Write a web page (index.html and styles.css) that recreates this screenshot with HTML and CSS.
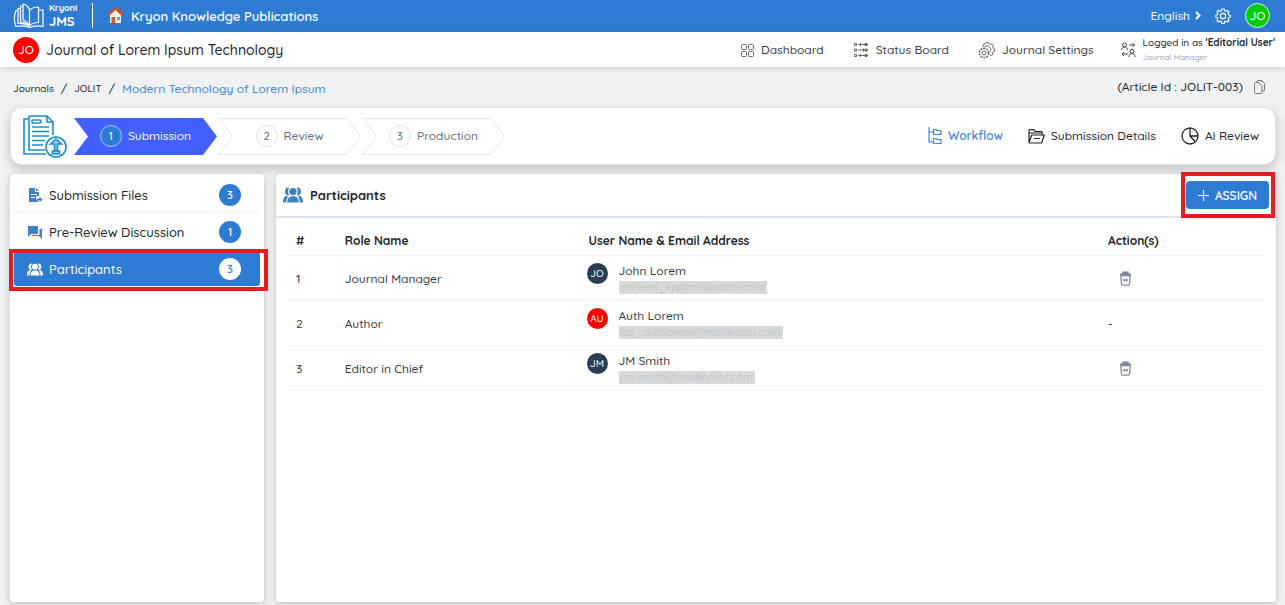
FILE: index.html
```html
<!DOCTYPE html>
<html lang="en">
<head>
	<meta charset="UTF-8">
	<meta name="viewport" content="width=device-width, initial-scale=1.0">
	<title>Participants | Kryoni JMS</title>
	<link rel="stylesheet" href="styles.css">
</head>
<body>

	<!-- SHARED ICONS -->
	<svg class="sprite" aria-hidden="true">
		<symbol id="people" viewBox="0 0 20 16">
			<circle cx="10" cy="4.6" r="3.700"/>
			<path d="M4.200 15.500c0-4.200 2-6.300 5.800-6.300s5.800 2.100 5.800 6.300z"/>
			<path d="M6.200.700C4.800 2.800 4.800 6 6.200 8.300 4 9.400 2 7.500 2 4.600S4 0 6.200.7zM13.800.7c1.400 2.100 1.400 5.300 0 7.600 2.200 1.100 4.200-.8 4.200-3.700S16 0 13.800.7z"/>
			<path d="M0 15.500c0-3.800 1-6 3-6.600l2.200.8C3.800 11 3.200 13 3.100 15.500zM20 15.500c0-3.800-1-6-3-6.600l-2.200.8c1.400 1.300 2 3.300 2.100 5.800z"/>
		</symbol>
		<symbol id="trash" viewBox="0 0 14 16">
			<g fill="none" stroke="currentColor" stroke-width="1.400">
				<path d="M1 3.500h12M4.500 3V1.500h5V3" stroke-width="2"/>
				<path d="M2 5h10l-.7 9c0 .8-.5 1.200-1.200 1.200H3.900c-.7 0-1.200-.4-1.200-1.200z"/>
				<path d="M4.200 9.800h5.600M5.500 8.200v3M8.500 8.200v3" stroke-width="1.200"/>
			</g>
		</symbol>
	</svg>

	<!-- TOP BAR -->
	<header class="topbar">
		<a class="logo" href="#">
			<svg width="32" height="26" viewBox="0 0 32 26" fill="none" stroke="currentColor" stroke-width="1.200" stroke-linejoin="round">
				<path d="M16.500 7.500c2-2.500 5-3.500 9-3.500v15.500c-4 0-7 1-9 3.500z"/>
				<path d="M16.500 23c-1-3-3.500-5-6.500-6V1c3.500 1 6 3.500 6.500 6.500"/>
				<path d="M10 3.500L7.500 3v16c3.500 0 6.500 1.500 9 4M7.500 5.500H5v15c4-.5 8 .5 11.500 2.500"/>
				<path d="M5 7.500H3C1 12 1 18.500 3 23.500c5-1 9-1 13.500 1 4-2 8-2 13.500-1V7h-4.500"/>
			</svg>
			<span class="logo-text">Kryoni<strong>JMS</strong></span>
		</a>
		<a class="publisher" href="#">
			<svg width="17" height="17" viewBox="0 0 17 17">
				<path d="M3 7l5.500-5L14 7v9H3z" fill="#f1eee8"/>
				<path d="M12 2h2v4h-2z" fill="#c8471d"/>
				<path d="M1 8.500L8.500 1.500 16 8.500" fill="none" stroke="#d84b20" stroke-width="2.200"/>
				<path d="M4.500 10H8v6H4.500z" fill="#d9541e"/>
				<path d="M10 10h3v3h-3z" fill="#58a6dd"/>
			</svg>
			Kryon Knowledge Publications
		</a>
		<div class="topbar-right">
			<button class="language" type="button">English
				<svg width="6" height="9" viewBox="0 0 6 9" fill="none" stroke="currentColor" stroke-width="2"><path d="M1 1l3.500 3.500L1 8"/></svg>
			</button>
			<button class="icon-button" type="button" aria-label="Settings">
				<svg width="16" height="16" viewBox="0 0 16 16" fill="none" stroke="currentColor" stroke-width="1.200" stroke-linejoin="round">
					<path d="M6.700 1h2.600l.4 1.800 1.300.5 1.500-.9 1.500 1.600-.9 1.500.5 1.200 1.600.5v2l-1.600.5-.5 1.300.9 1.500-1.500 1.500-1.500-.9-1.300.5-.4 1.700H6.700l-.4-1.700-1.300-.5-1.500.9L2 12.500l.9-1.500-.5-1.300L.8 9.200v-2l1.600-.5.500-1.200L2 4l1.500-1.600 1.500.9 1.300-.5z"/>
					<circle cx="8" cy="8" r="2.600"/>
				</svg>
			</button>
			<button class="avatar avatar-user" type="button">JO</button>
		</div>
	</header>

	<!-- JOURNAL BAR -->
	<div class="journalbar">
		<span class="avatar avatar-journal">JO</span>
		<h1 class="journal-name">Journal of Lorem Ipsum Technology</h1>
		<nav class="journal-nav">
			<a href="#">
				<svg width="13" height="13" viewBox="0 0 13 13" fill="none" stroke="currentColor">
					<rect x=".5" y=".5" width="5" height="5" rx="1"/><rect x="7.500" y=".5" width="5" height="5" rx="1"/>
					<rect x=".5" y="7.500" width="5" height="5" rx="1"/><rect x="7.500" y="7.500" width="5" height="5" rx="1"/>
				</svg>
				Dashboard
			</a>
			<a href="#">
				<svg width="16" height="16" viewBox="0 0 16 16" fill="none" stroke="currentColor">
					<path d="M1.500 1.500h2v2h-2zM1.500 7h2v2h-2zM1.500 12.500h2v2h-2zM5 2.500h10M5 8h10M5 13.500h10"/>
					<path d="M7.500 1v3M12 1.500h2v2h-2zM10.500 6.500v3M12 7h2v2h-2zM7.500 12v3M12 12.500h2v2h-2z"/>
				</svg>
				Status Board
			</a>
			<a href="#">
				<svg width="17" height="17" viewBox="0 0 17 17" fill="none" stroke="currentColor">
					<circle cx="6" cy="11" r="2"/><circle cx="6" cy="11" r="4.600" stroke-width="1.500" stroke-dasharray="2 .9"/>
					<path d="M4 4.500l1.500-.7.300-1.800 1.700-.3.800-1.200h2l.8 1.300 1.600.5 1.500-.3 1 1.500-.5 1.500.8 1.300 1.300.8-.2 2-1.500.7-.5 1.400.2 1.500-1.800.8-1.200-.7"/>
					<path d="M6 5.500c1-1.500 3-2 4.500-1.200 2.500 1 3.200 4.200 1.300 6"/>
				</svg>
				Journal Settings
			</a>
		</nav>
		<a class="logged-in" href="#">
			<svg width="15" height="16" viewBox="0 0 15 16" fill="none" stroke="currentColor">
				<circle cx="3.500" cy="3" r="2"/><path d="M.6 8c0-4 5.800-4 5.800 0M8 3h5.500M11.500 1l2 2-2 2"/>
				<circle cx="11" cy="9.300" r="2"/><path d="M8 15c0-4.500 6-4.500 6 0M7 12H1M3 10l-2 2 2 2"/>
			</svg>
			<span class="logged-text">
				<span>Logged in as <strong>'Editorial User'</strong></span>
				<small>Journal Manager</small>
			</span>
		</a>
	</div>

	<!-- BREADCRUMB -->
	<div class="crumbbar">
		<nav class="breadcrumb">
			<a href="#">Journals</a><span>/</span><a href="#">JOLIT</a><span>/</span><a class="current" href="#">Modern Technology of Lorem Ipsum</a>
		</nav>
		<span class="article-id">(Article Id : JOLIT-003)</span>
		<button class="icon-button copy" type="button" aria-label="Copy article id">
			<svg width="11" height="14" viewBox="0 0 11 14" fill="none" stroke="currentColor">
				<path d="M3 2.500V1.500q0-1 1-1h3.500l3 3V10q0 1-1 1H8M7.500.5V2"/>
				<path d="M.5 3.500q0-1 1-1H5L8 5.500v7q0 1-1 1H1.500q-1 0-1-1z"/>
			</svg>
		</button>
	</div>

	<!-- WORKFLOW STEPS -->
	<section class="workflow">
		<svg class="doc-icon" width="44" height="43" viewBox="0 0 44 43" fill="none" stroke="currentColor" stroke-width="1.600">
			<path d="M6 1h18l6 6v13M6 1v34h16M24 1v6h6M6 4H1v35h22"/>
			<rect x="9" y="5" width="9" height="3" rx="1"/>
			<path d="M9 12h17M9 16.500h17M9 21h17M9 25.500h13M9 30h11"/>
			<circle cx="33" cy="32" r="10" fill="#fff"/>
			<path d="M31.500 36v-7h-4l5.500-5 5.500 5h-4v7zM29.500 36h7v3h-7z" fill="#8fd0ea"/>
		</svg>
		<ol class="steps">
			<li class="step active">
				<svg class="step-shape" viewBox="0 0 143 37" preserveAspectRatio="none"><path d="M0 0h129l14 18.500L129 37H0l14-18.500z"/></svg>
				<span class="step-number">1</span>Submission
			</li>
			<li class="step">
				<svg class="step-shape" viewBox="0 0 143 37" preserveAspectRatio="none"><path d="M1 .5h128l13.500 18L129 36.500H1l13.500-18z"/></svg>
				<span class="step-number">2</span>Review
			</li>
			<li class="step">
				<svg class="step-shape" viewBox="0 0 143 37" preserveAspectRatio="none"><path d="M1 .5h128l13.500 18L129 36.500H1l13.500-18z"/></svg>
				<span class="step-number">3</span>Production
			</li>
		</ol>
		<nav class="views">
			<a class="active" href="#">
				<svg width="14" height="18" viewBox="0 0 14 18" fill="none" stroke="currentColor" stroke-width="1.200">
					<path d="M1 0v15h4M1 5h4M5.500 2.500h2.500l1 1h4v4H5.500zM5.500 11.500h2.500l1 1h4v4H5.500z"/>
				</svg>
				Workflow
			</a>
			<a href="#">
				<svg width="17" height="15" viewBox="0 0 17 15" fill="none" stroke="currentColor" stroke-width="1.200" stroke-linejoin="round">
					<path d="M1 13.500V1.500q0-.8.8-.8h4l1.500 1.800h6q.9 0 .9 1V6M1 13.500L3.800 6h12.500L14 13q-.3 1-1.200 1H1.500zM1 4h13M6 9.500h6"/>
				</svg>
				Submission Details
			</a>
			<a href="#">
				<svg width="18" height="18" viewBox="0 0 18 18" fill="none" stroke="currentColor" stroke-width="1.300">
					<circle cx="9" cy="9" r="8"/><path d="M9 1v8h8M9 9l5.500 6"/>
				</svg>
				AI Review
			</a>
		</nav>
	</section>

	<main class="content">
		<!-- SIDEBAR -->
		<aside class="sidebar">
			<a class="side-item" href="#">
				<svg width="16" height="16" viewBox="0 0 16 16">
					<path d="M2 1h6v4h4v4H9v4h2v2H2z" fill="currentColor"/><path d="M9 1l3 3H9z" fill="currentColor"/>
					<path d="M4 7.500h6M4 10.500h4" stroke="#fff"/><path d="M9.500 12.500h5M12.500 10.500l2 2-2 2" fill="none" stroke="currentColor" stroke-width="1.300"/>
				</svg>
				Submission Files <span class="count">3</span>
			</a>
			<a class="side-item" href="#">
				<svg width="16" height="16" viewBox="0 0 16 16" fill="currentColor">
					<path d="M1 2h10v8H4l-3 3zM12.500 5H15v10l-3-3H5v-1h7.500z"/>
				</svg>
				Pre-Review Discussion <span class="count">1</span>
			</a>
			<a class="side-item active" href="#">
				<svg width="16" height="13"><use href="#people"/></svg>
				Participants <span class="count">3</span>
			</a>
		</aside>

		<!-- PARTICIPANTS -->
		<section class="panel">
			<div class="panel-head">
				<svg width="20" height="16"><use href="#people"/></svg>
				<h2>Participants</h2>
				<div class="assign-wrap">
					<button class="assign" type="button">
						<svg width="11" height="11" viewBox="0 0 11 11" stroke="currentColor" stroke-width="1.200"><path d="M5.500 0v11M0 5.500h11"/></svg>
						ASSIGN
					</button>
				</div>
			</div>
			<table class="participants">
				<thead>
					<tr>
						<th class="col-no">#</th>
						<th class="col-role">Role Name</th>
						<th class="col-user">User Name &amp; Email Address</th>
						<th class="col-action">Action(s)</th>
					</tr>
				</thead>
				<tbody>
					<tr>
						<td>1</td>
						<td>Journal Manager</td>
						<td>
							<div class="user">
								<span class="avatar avatar-small">JO</span>
								<div>John Lorem<span class="email">shreeni_kp@mailinator.com</span></div>
							</div>
						</td>
						<td><button class="delete" type="button" aria-label="Remove John Lorem"><svg width="13" height="15"><use href="#trash"/></svg></button></td>
					</tr>
					<tr>
						<td>2</td>
						<td>Author</td>
						<td>
							<div class="user">
								<span class="avatar avatar-small red">AU</span>
								<div>Auth Lorem<span class="email">au_authlorem@mailinator.com</span></div>
							</div>
						</td>
						<td>-</td>
					</tr>
					<tr>
						<td>3</td>
						<td>Editor in Chief</td>
						<td>
							<div class="user">
								<span class="avatar avatar-small">JM</span>
								<div>JM Smith<span class="email">jm-smith@mailinator.com</span></div>
							</div>
						</td>
						<td><button class="delete" type="button" aria-label="Remove JM Smith"><svg width="13" height="15"><use href="#trash"/></svg></button></td>
					</tr>
				</tbody>
			</table>
		</section>
	</main>

</body>
</html>
```
FILE: styles.css
```css
* {
	margin: 0;
	padding: 0;
	box-sizing: border-box;
	font-family: Quicksand, Lato, sans-serif;
}

body {
	background: #eff1f3;
	color: #212529;
	font-size: 12px;
	font-weight: 500;
	line-height: 16px;
	min-height: 100vh;
	display: flex;
	flex-direction: column;
}

a {
	color: inherit;
	text-decoration: none;
}

button {
	border: none;
	background: none;
	color: inherit;
	font-size: 12px;
	font-weight: 500;
	cursor: pointer;
}

svg {
	flex: none;
}

.sprite {
	position: absolute;
	width: 0;
	height: 0;
}

.avatar {
	display: flex;
	align-items: center;
	justify-content: center;
	flex: none;
	border-radius: 50%;
	color: #fff;
}

/* TOP BAR */
.topbar {
	display: flex;
	align-items: center;
	height: 32px;
	padding: 0 15px 1px 13px;
	background: #2e7bd4;
	color: #fff;
}

.logo {
	display: flex;
	align-items: center;
	gap: 4px;
	height: 25px;
	padding-right: 15px;
	margin-right: 14px;
	border-right: 1px solid #fff;
}

.logo-text {
	font-size: 9px;
	font-weight: bold;
	line-height: 11px;
}

.logo-text strong {
	display: block;
	font-size: 13px;
	line-height: 16px;
}

.publisher {
	display: flex;
	align-items: center;
	gap: 7px;
	font-size: 13px;
	font-weight: 600;
}

.topbar-right {
	display: flex;
	align-items: center;
	gap: 14px;
	margin-left: auto;
}

.language {
	display: flex;
	align-items: center;
	gap: 5px;
}

.icon-button {
	display: flex;
}

.avatar-user {
	width: 25px;
	height: 25px;
	border: 1px solid #d9f7dc;
	background: #00cc0a;
}

/* JOURNAL BAR */
.journalbar {
	display: flex;
	align-items: center;
	height: 35px;
	padding: 1px 10px 0 13px;
	background: #fff;
	box-shadow: 0 2px 6px rgba(0, 0, 0, 0.12);
}

.avatar-journal {
	width: 26px;
	height: 26px;
	margin-right: 7px;
	background: #f00;
}

.journal-name {
	font-size: 14px;
	font-weight: 500;
}

.journal-nav {
	display: flex;
	gap: 29px;
	margin-left: auto;
	margin-right: 27px;
	color: #343a40;
}

.journal-nav a {
	display: flex;
	align-items: center;
	gap: 7px;
}

.journal-nav svg {
	color: #666;
}

.logged-in {
	display: flex;
	align-items: center;
	gap: 7px;
	font-size: 10px;
}

.logged-in svg {
	color: #444;
}

.logged-text span {
	display: block;
	line-height: 14px;
}

.logged-text small {
	display: block;
	color: #98a2bd;
	font-size: 8px;
	line-height: 14px;
}

/* BREADCRUMB */
.crumbbar {
	display: flex;
	align-items: center;
	height: 40px;
	padding: 0 20px 0 13px;
}

.breadcrumb {
	display: flex;
	align-items: center;
	gap: 7px;
	font-size: 10px;
	padding-top: 3px;
}

.breadcrumb span {
	font-size: 12px;
}

.breadcrumb .current {
	color: #4385d6;
	font-size: 12px;
}

.article-id {
	margin-left: auto;
}

.copy {
	margin-left: 11px;
	color: #777;
}

/* WORKFLOW */
.workflow {
	display: flex;
	align-items: center;
	height: 58px;
	margin: 0 9px 0 10px;
	padding: 0 16px 0 12px;
	border: 1px solid #dbe5f2;
	border-radius: 12px;
	background: #fff;
	box-shadow: 0 4px 10px rgba(0, 0, 0, 0.2);
}

.doc-icon {
	color: #1b8fc6;
}

.steps {
	display: flex;
	gap: 1px;
	margin-left: 7px;
	list-style: none;
}

.step {
	position: relative;
	display: flex;
	align-items: center;
	justify-content: center;
	gap: 6px;
	width: 143px;
	height: 37px;
	color: #5f7180;
	isolation: isolate;
}

.step-shape {
	position: absolute;
	inset: 0;
	width: 100%;
	height: 100%;
	z-index: -1;
	fill: #fff;
	stroke: #dfe8f5;
}

.step-number {
	display: flex;
	align-items: center;
	justify-content: center;
	width: 22px;
	height: 22px;
	border: 1px solid #dde3ea;
	border-radius: 50%;
	font-size: 11px;
}

.step.active {
	color: #fff;
}

.step.active .step-shape {
	fill: #4260ff;
	stroke: none;
}

.step.active .step-number {
	border-color: #a9c9f0;
	background: #2e7bd4;
}

.views {
	display: flex;
	gap: 25px;
	margin-left: auto;
}

.views a {
	display: flex;
	align-items: center;
	gap: 6px;
}

.views .active {
	color: #3f86da;
	font-weight: 600;
}

/* CONTENT */
.content {
	display: flex;
	flex: 1;
	gap: 12px;
	padding: 9px 9px 3px 10px;
}

.sidebar,
.panel {
	border-radius: 4px;
	background: #fff;
	box-shadow: 0 2px 8px rgba(0, 0, 0, 0.2);
}

.sidebar {
	flex: none;
	width: 254px;
	padding: 4px 4px;
}

.side-item {
	position: relative;
	display: flex;
	align-items: center;
	gap: 6px;
	height: 34px;
	margin-bottom: 3px;
	padding: 0 19px 0 13px;
	border-bottom: 1px solid #eef1f4;
	font-size: 13px;
}

.side-item svg {
	color: #4280c6;
	fill: currentColor;
}

.count {
	display: flex;
	align-items: center;
	justify-content: center;
	width: 22px;
	height: 22px;
	margin-left: auto;
	border-radius: 50%;
	background: #2e7bd4;
	color: #fff;
	font-size: 11px;
	font-weight: 600;
}

.side-item.active {
	border: none;
	border-radius: 3px;
	background: #2e7bd4;
	color: #fff;
}

.side-item.active svg {
	color: #fff;
}

.side-item.active .count {
	background: #fff;
	color: #2e7bd4;
}

/* red frames round the highlighted controls */
.side-item.active::after,
.assign-wrap::after {
	content: "";
	position: absolute;
	inset: -3px -8px -5px -5px;
	border: 4px solid #e81b20;
	pointer-events: none;
}

/* PARTICIPANTS */
.panel {
	flex: 1;
}

.panel-head {
	display: flex;
	align-items: center;
	gap: 7px;
	height: 44px;
	padding: 0 7px;
	border-bottom: 2px solid #dce5ef;
}

.panel-head > svg {
	fill: #4280c6;
}

.panel-head h2 {
	font-size: 13px;
	font-weight: bold;
}

.assign-wrap {
	position: relative;
	margin-left: auto;
}

.assign-wrap::after {
	inset: -9px -6px -9px -5px;
}

.assign {
	display: flex;
	align-items: center;
	gap: 6px;
	height: 28px;
	padding: 0 12px;
	border-radius: 4px;
	background: #2e7bd4;
	color: #fff;
	font-weight: 600;
}

.participants {
	width: calc(100% - 25px);
	margin: 7px 13px 0 12px;
	border-collapse: collapse;
	table-layout: fixed;
}

.participants th,
.participants td {
	padding: 2px 0 0 8px;
	border-bottom: 1px solid #edf1f5;
	text-align: left;
}

.participants th {
	height: 30px;
	font-weight: bold;
}

.participants td {
	height: 45px;
	color: #343a40;
}

.col-no {
	width: 5%;
}

.col-role {
	width: 25%;
}

.col-action {
	width: 163px;
}

.user {
	display: flex;
	gap: 11px;
	margin-left: -2px;
}

.avatar-small {
	width: 21px;
	height: 21px;
	background: #2b3d52;
	font-size: 10px;
}

.avatar-small.red {
	background: #f00;
}

.email {
	display: block;
	padding: 0 2px;
	background: #d7d9db;
	color: #c4c8cc;
	font-size: 11px;
	line-height: 13px;
	margin-top: 2px;
}

.delete {
	display: flex;
	margin-left: 11px;
	color: #7d8ba0;
}
```
